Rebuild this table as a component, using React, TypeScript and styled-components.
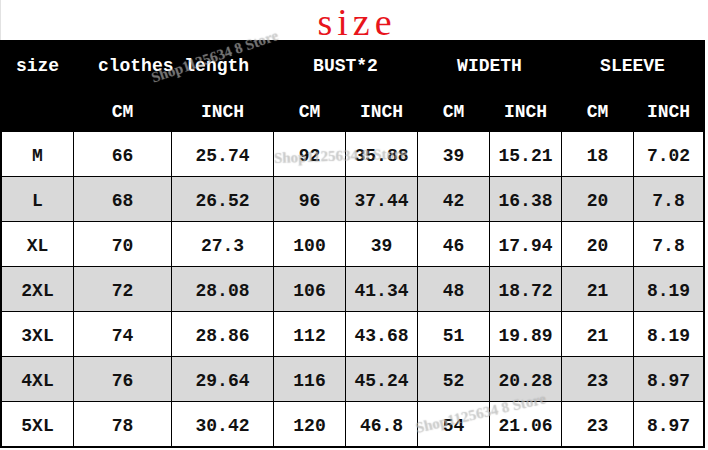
import React from "react";
import styled, { createGlobalStyle } from "styled-components";

const Global = createGlobalStyle`
  html, body { margin: 0; padding: 0; background: #fff; }
`;

const Page = styled.div`
  position: relative;
  width: 708px;
  height: 450px;
  overflow: hidden;
  background: #fff;
`;

const Title = styled.div`
  height: 40px;
  box-sizing: border-box;
  border-left: 1px solid #e2e2e2;
  padding: 3px 0 0 5px;
  text-align: center;
  font-family: "Liberation Serif", serif;
  font-size: 38px;
  line-height: 38px;
  letter-spacing: 5px;
  color: #e8141b;
`;

const Grid = styled.div`
  width: 705px;
  box-sizing: border-box;
  display: grid;
  grid-template-columns: 71px 97px 101px 71px 71px 71px 71px 71px 69px;
  grid-template-rows: 50px 40px repeat(7, 44px);
  gap: 1px;
  padding: 0 2px 2px 2px;
  background: #000;
  font-family: "Liberation Mono", monospace;
  font-weight: bold;
  font-size: 18px;
`;

type Tone = "head" | "white" | "gray";

const Cell = styled.div<{ $tone: Tone; $span?: number }>`
  grid-column: span ${(p) => p.$span ?? 1};
  display: flex;
  align-items: center;
  justify-content: center;
  padding-top: ${(p) => (p.$tone === "head" ? "2px" : "4px")};
  box-sizing: border-box;
  white-space: pre;
  background: ${(p) => (p.$tone === "head" ? "#000" : p.$tone === "gray" ? "#d9d9d9" : "#fff")};
  color: ${(p) => (p.$tone === "head" ? "#fff" : "#111")};
`;

const Watermark = styled.div<{ $x: number; $y: number; $rot: number }>`
  position: absolute;
  left: ${(p) => p.$x}px;
  top: ${(p) => p.$y}px;
  transform: rotate(${(p) => p.$rot}deg);
  transform-origin: left center;
  font-family: "Liberation Serif", serif;
  font-weight: bold;
  font-size: 15px;
  white-space: nowrap;
  color: rgba(255, 255, 255, 0.3);
  text-shadow: 0 0 1px rgba(120, 120, 120, 0.55);
  pointer-events: none;
`;

const rows: string[][] = [
  ["M", "66", "25.74", "92", "35.88", "39", "15.21", "18", "7.02"],
  ["L", "68", "26.52", "96", "37.44", "42", "16.38", "20", "7.8"],
  ["XL", "70", "27.3", "100", "39", "46", "17.94", "20", "7.8"],
  ["2XL", "72", "28.08", "106", "41.34", "48", "18.72", "21", "8.19"],
  ["3XL", "74", "28.86", "112", "43.68", "51", "19.89", "21", "8.19"],
  ["4XL", "76", "29.64", "116", "45.24", "52", "20.28", "23", "8.97"],
  ["5XL", "78", "30.42", "120", "46.8", "54", "21.06", "23", "8.97"],
];

export default function App() {
  return (
    <Page>
      <Global />
      <Title>size</Title>
      <Grid>
        <Cell $tone="head">size</Cell>
        <Cell $tone="head" $span={2}>clothes length</Cell>
        <Cell $tone="head" $span={2}>BUST*2</Cell>
        <Cell $tone="head" $span={2}>WIDETH</Cell>
        <Cell $tone="head" $span={2}>SLEEVE</Cell>
        <Cell $tone="head" />
        {["CM", "INCH", "CM", "INCH", "CM", "INCH", "CM", "INCH"].map((h, i) => (
          <Cell key={"u" + i} $tone="head">{h}</Cell>
        ))}
        {rows.map((r, ri) =>
          r.map((v, ci) => (
            <Cell key={ri + "-" + ci} $tone={ri % 2 === 1 ? "gray" : "white"}>
              {v}
            </Cell>
          ))
        )}
      </Grid>
      <Watermark $x={152} $y={70} $rot={-19}>Shop1125634 8 Store</Watermark>
      <Watermark $x={274} $y={150} $rot={-2}>Shop1125634 8 Store</Watermark>
      <Watermark $x={416} $y={420} $rot={-13}>Shop1125634 8 Store</Watermark>
    </Page>
  );
}
